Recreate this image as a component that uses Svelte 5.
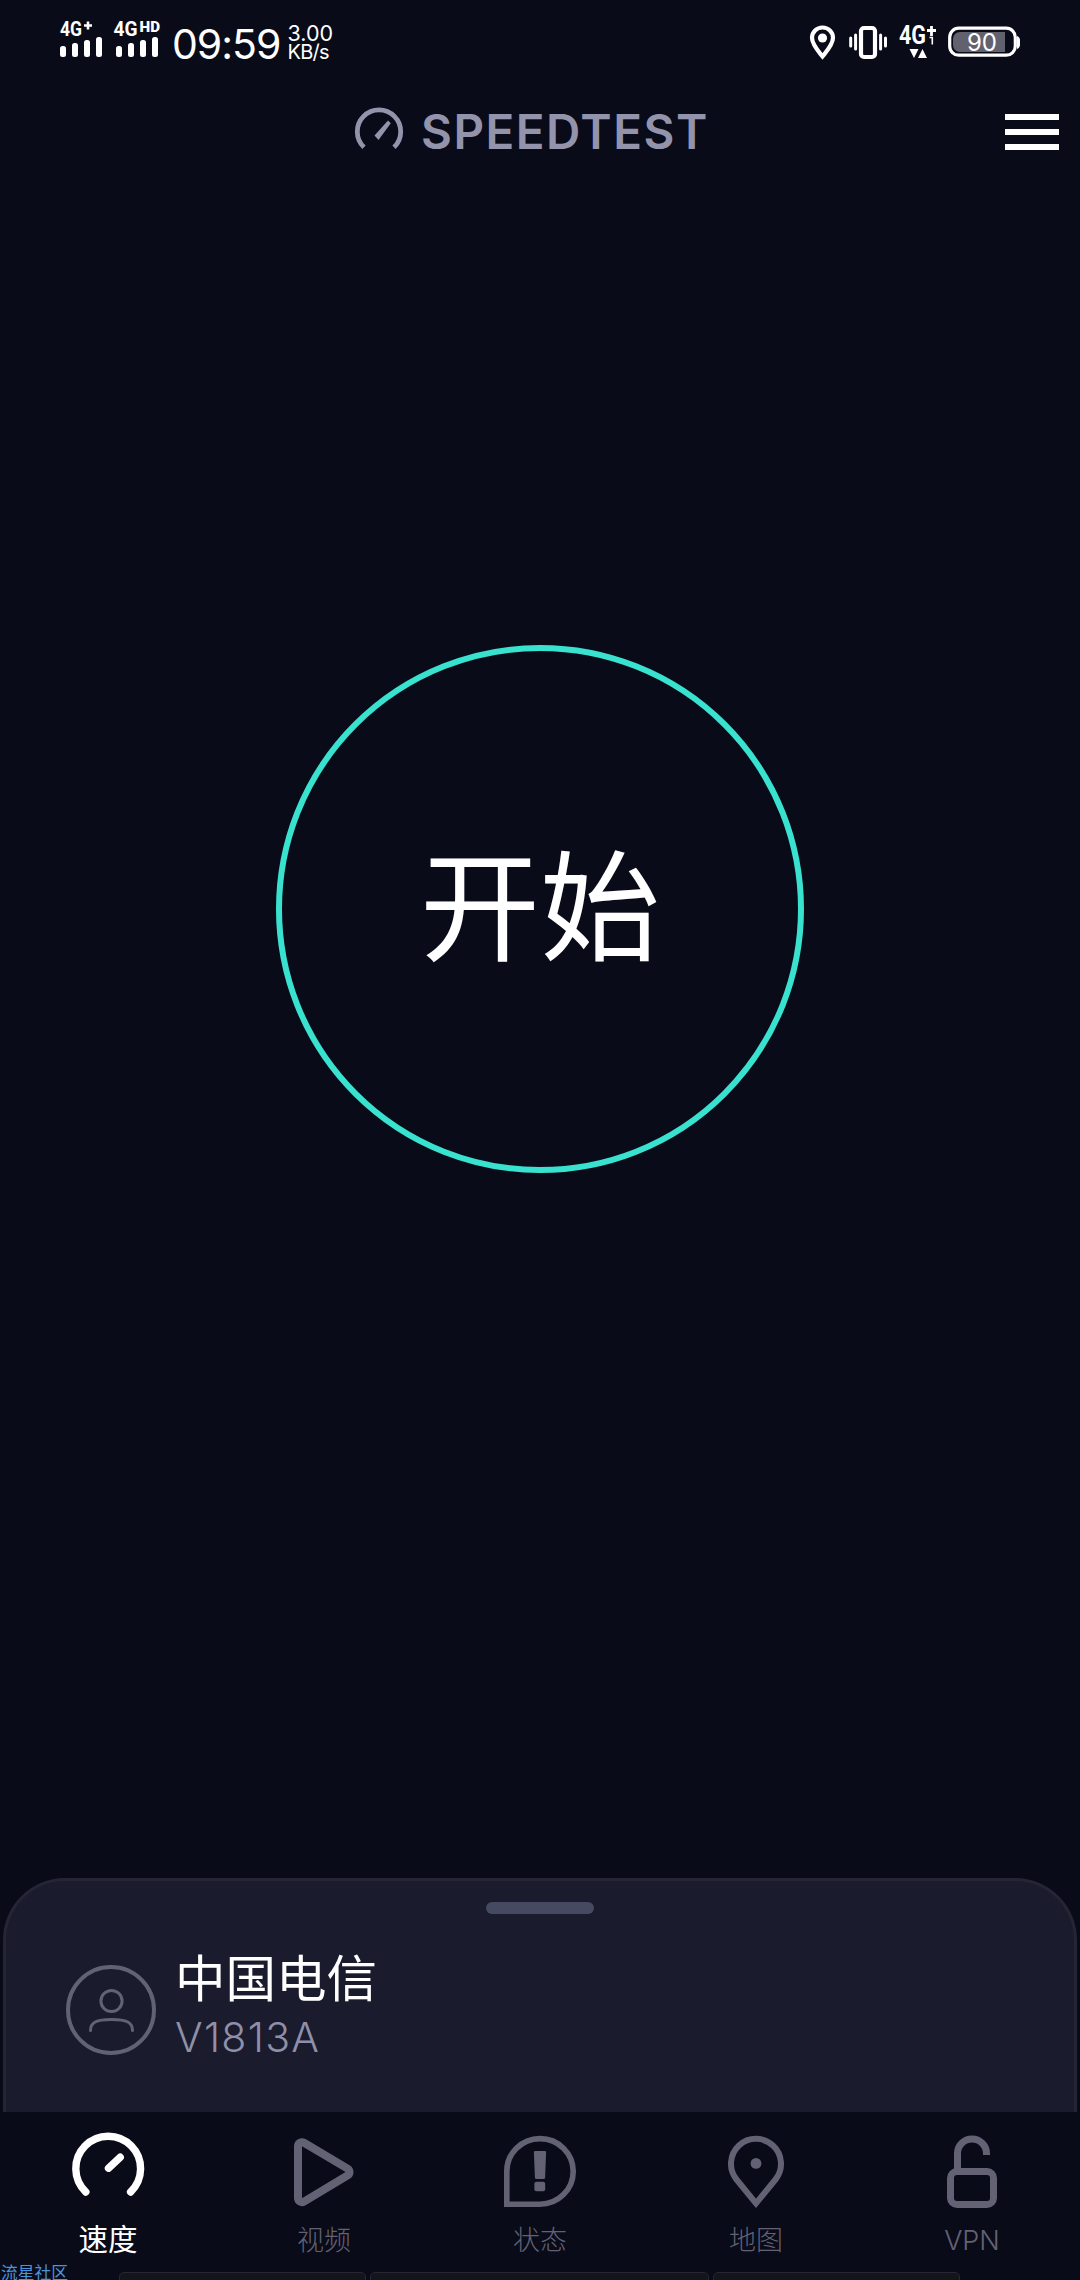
<script lang="ts">
  type Tab = { id: string; label: string };

  const tabs: Tab[] = [
    { id: "speed", label: "速度" },
    { id: "video", label: "视频" },
    { id: "status", label: "状态" },
    { id: "map", label: "地图" },
    { id: "vpn", label: "VPN" },
  ];

  const signals = ["+", "HD"];

  let active = $state("speed");
</script>

<div class="screen">
  <header class="status-bar">
    <div class="status-left">
      {#each signals as kind}
        <svg class="signal" width="50" height="40" viewBox="0 0 50 40">
          {#if kind === "+"}
            <text x="0" y="17" class="net" textLength="22" lengthAdjust="spacingAndGlyphs">4G</text>
            <path d="M24 6.5h8M28 2.5v8" stroke="#fff" stroke-width="2.6" />
          {:else}
            <text x="-2.5" y="17" class="net" textLength="24" lengthAdjust="spacingAndGlyphs">4G</text>
            <text x="23.5" y="13" class="net small" textLength="20.5" lengthAdjust="spacingAndGlyphs">HD</text>
          {/if}
          <rect x="0" y="27" width="6" height="11" rx="2.5" />
          <rect x="12" y="24" width="6" height="14" rx="2.5" />
          <rect x="24" y="21" width="6" height="17" rx="2.5" />
          <rect x="36" y="18" width="6" height="20" rx="2.5" />
        </svg>
      {/each}
      <span class="time">09:59</span>
      <div class="rate">
        <span>3.00</span>
        <span class="unit">KB/s</span>
      </div>
    </div>

    <div class="status-right">
      <svg width="28" height="36" viewBox="0 0 28 36">
        <path
          d="M12.5 31.5C8.5 26.5 2 19.5 2 12.8A10.5 10.3 0 0 1 23 12.8C23 19.5 16.5 26.5 12.5 31.5Z"
          fill="none"
          stroke="#fff"
          stroke-width="4.2"
        />
        <circle cx="12.5" cy="13" r="4.6" />
      </svg>
      <svg width="40" height="36" viewBox="0 0 40 36">
        <rect x="12" y="3" width="14" height="29" rx="3" fill="none" stroke="#fff" stroke-width="4.2" />
        <path
          d="M1.7 13v8M6.6 10v14M31.6 10v14M36.5 13v8"
          stroke="#fff"
          stroke-width="3"
          stroke-linecap="round"
        />
      </svg>
      <svg width="40" height="36" viewBox="0 0 40 36">
        <text x="-1" y="18.5" class="net big" textLength="27" lengthAdjust="spacingAndGlyphs">4G</text>
        <path d="M27 5.5h9M31.5 1v10" stroke="#fff" stroke-width="2.8" />
        <path d="M29.5 12.5h2.8v7" fill="none" stroke="#fff" stroke-width="1.6" />
        <path d="M9.5 24h9l-4.5 9zM18 33h9l-4.5-9z" />
      </svg>
      <svg class="battery" width="74" height="36" viewBox="0 0 74 36">
        <rect x="1.7" y="3.2" width="65.6" height="27" rx="9" fill="none" stroke="#fff" stroke-width="3.2" />
        <path d="M57 7H12a7 7 0 0 0-7 7v6a7 7 0 0 0 7 7h45z" fill="#62626e" />
        <path d="M69 11a5 5 0 0 1 3 5v3a5 5 0 0 1-3 5z" />
        <text x="34" y="25.8" class="level" text-anchor="middle">90</text>
      </svg>
    </div>
  </header>

  <div class="title-bar">
    <div class="brand">
      <svg class="logo" width="50" height="46" viewBox="0 0 50 46">
        <path d="M10 40.3A21.7 21.7 0 1 1 40 40.3" fill="none" stroke="#9394ab" stroke-width="4.8" />
        <path d="M34 13.5l2.8 2.7L24.5 33l-4-4.5z" fill="#9394ab" />
      </svg>
      <span class="brand-name">SPEEDTEST</span>
    </div>
    <button class="menu" aria-label="菜单">
      <span></span>
      <span></span>
      <span></span>
    </button>
  </div>

  <main>
    <button class="start">开始</button>
  </main>

  <section class="sheet">
    <div class="handle"></div>
    <div class="provider">
      <svg class="avatar" width="90" height="90" viewBox="0 0 90 90">
        <circle cx="45" cy="45" r="43" stroke-width="4" />
        <circle cx="45.5" cy="36" r="10.6" stroke-width="3" />
        <path d="M24.5 65.5C24.5 57.5 30 54.5 45.5 54.5S66.5 57.5 66.5 65.5" stroke-width="3" stroke-linecap="round" />
      </svg>
      <div class="names">
        <div class="isp">中国电信</div>
        <div class="device">V1813A</div>
      </div>
    </div>
  </section>

  <nav>
    {#each tabs as tab (tab.id)}
      <button class="tab" class:active={active === tab.id} onclick={() => (active = tab.id)}>
        <svg width="72" height="78" viewBox="0 0 72 78">
          {#if tab.id === "speed"}
            <path
              d="M13.8 59A32.4 32.4 0 1 1 58.6 59M36.5 35.2L48.2 24.2"
              stroke-width="7.4"
              stroke-linecap="round"
            />
          {:else if tab.id === "video"}
            <path
              d="M10 13.2A4 4 0 0 1 16 9.8L59.6 35.6A4 4 0 0 1 59.6 42.4L16 68.6A4 4 0 0 1 10 65.2Z"
              stroke-width="8"
            />
          {:else if tab.id === "status"}
            <path d="M2.8 71.2V38.5A33.2 32.8 0 1 1 36 71.2Z" stroke-width="5.6" />
            <path class="solid" d="M31.2 18h9.6q1.4 0 1.3 1.4l-1 25q0 1.6-1.6 1.6h-7q-1.6 0-1.6-1.6l-1-25q0-1.4 1.3-1.4z" />
            <rect class="solid" x="30.4" y="48.8" width="10.8" height="9.4" rx="2" />
          {:else if tab.id === "map"}
            <path d="M36 70.3L16.5 46.5A25 25 0 1 1 55.5 46.5Z" stroke-width="6" />
            <circle class="solid" cx="36" cy="30.4" r="5.4" />
          {:else}
            <rect x="14.5" y="38.5" width="43" height="33" rx="6.5" stroke-width="7" />
            <path d="M21.5 37V20.5A14.5 14.5 0 0 1 50.5 20.5V22" stroke-width="7" />
          {/if}
        </svg>
        <span class="label">{tab.label}</span>
      </button>
    {/each}
  </nav>

  <div class="key-row">
    <i></i>
    <i class="wide"></i>
    <i></i>
  </div>
  <div class="watermark">流星社区</div>
</div>

<style>
  :global(body) {
    background: #090b19;
  }

  .screen {
    position: relative;
    display: flex;
    flex-direction: column;
    width: 1080px;
    height: 2280px;
    overflow: hidden;
    background: #090b19;
    color: #fff;
    font-family: Inter, "Noto Sans CJK SC", sans-serif;
  }

  button {
    margin: 0;
    padding: 0;
    border: 0;
    background: none;
    color: inherit;
    font: inherit;
  }

  svg {
    display: block;
    flex-shrink: 0;
    overflow: visible;
  }

  .status-bar {
    display: flex;
    justify-content: space-between;
    height: 84px;
    padding: 0 58px 0 60px;
    box-sizing: border-box;
  }

  .status-bar svg {
    fill: #fff;
  }

  .status-left {
    display: flex;
    align-items: flex-start;
  }

  .signal {
    margin: 19px 6px 0 0;
  }

  .net {
    font-family: Roboto, sans-serif;
    font-size: 20px;
    font-weight: 700;
  }

  .net.small {
    font-size: 14px;
    font-weight: 900;
  }

  .net.big {
    font-size: 25px;
  }

  .time {
    margin-top: 20px;
    font-size: 41px;
    line-height: 49px;
    letter-spacing: -1px;
  }

  .rate {
    display: flex;
    flex-direction: column;
    margin: 24px 0 0 7px;
    font-size: 21.5px;
    line-height: 19px;
  }

  .rate .unit {
    font-size: 20px;
    letter-spacing: -0.7px;
  }

  .status-right {
    display: flex;
    align-items: flex-start;
    gap: 11px;
    padding-top: 25px;
  }

  .battery {
    margin-left: -3px;
  }

  .level {
    font-size: 24px;
  }

  .title-bar {
    display: flex;
    justify-content: space-between;
    align-items: flex-start;
    height: 96px;
    padding: 22px 21px 0 354px;
    box-sizing: border-box;
  }

  .brand {
    display: flex;
    align-items: flex-start;
    gap: 17px;
  }

  .logo {
    margin-top: 1px;
  }

  .brand-name {
    color: #9394ab;
    font-size: 47.5px;
    font-weight: 600;
    line-height: 52px;
    letter-spacing: 1.5px;
  }

  .menu {
    display: flex;
    flex-direction: column;
    gap: 9px;
    margin-top: 8px;
  }

  .menu span {
    width: 54px;
    height: 6px;
    background: #fff;
  }

  main {
    display: flex;
    flex: 1;
    justify-content: center;
    align-items: flex-start;
    padding-top: 465px;
  }

  .start {
    width: 528px;
    height: 528px;
    padding-bottom: 18px;
    box-sizing: border-box;
    border: 6px solid #39e1cf;
    border-radius: 50%;
    font-family: "Noto Sans CJK SC", sans-serif;
    font-size: 120px;
    line-height: 1;
  }

  .sheet {
    height: 234px;
    margin: 0 3px;
    box-sizing: border-box;
    border: 3px solid #252535;
    border-bottom: 0;
    border-radius: 62px 62px 0 0;
    background: #1b1b2e;
  }

  .handle {
    width: 108px;
    height: 12px;
    margin: 21px auto 0;
    border-radius: 6px;
    background: #464962;
  }

  .provider {
    display: flex;
    align-items: flex-start;
    gap: 19px;
    padding: 23px 0 0 60px;
  }

  .avatar {
    margin-top: 18px;
    fill: none;
    stroke: #626276;
  }

  .names {
    padding-top: 5px;
  }

  .avatar {
    margin-top: 28px;
  }

  .isp {
    font-family: "Noto Sans CJK SC", sans-serif;
    font-size: 50.5px;
    line-height: 66px;
  }

  .device {
    margin-top: 4px;
    color: #8f90a8;
    font-size: 41px;
    font-weight: 300;
    line-height: 50px;
    letter-spacing: 1.3px;
  }

  nav {
    display: flex;
    height: 160px;
  }

  .tab {
    display: flex;
    flex: 1;
    flex-direction: column;
    align-items: center;
    padding-top: 21px;
    color: #626274;
  }

  .tab svg {
    fill: none;
    stroke: currentColor;
  }

  .tab .solid {
    fill: currentColor;
    stroke: none;
  }

  .label {
    margin-top: 9px;
    font-size: 27px;
    font-weight: 300;
    line-height: 41px;
  }

  .tab.active {
    color: #fff;
  }

  .active .label {
    margin-top: 8px;
    font-size: 29.5px;
    font-weight: 400;
  }

  .key-row {
    display: flex;
    gap: 4px;
    height: 8px;
    padding: 0 120px 0 119px;
    overflow: hidden;
  }

  .key-row i {
    width: 247px;
    height: 20px;
    box-sizing: border-box;
    border: 1px solid #272733;
    border-radius: 5px;
    background: #14141b;
  }

  .key-row .wide {
    flex: 1;
  }

  .watermark {
    position: absolute;
    left: 1px;
    top: 2263px;
    color: #4a94dc;
    font-size: 16.8px;
    line-height: 20px;
  }
</style>
